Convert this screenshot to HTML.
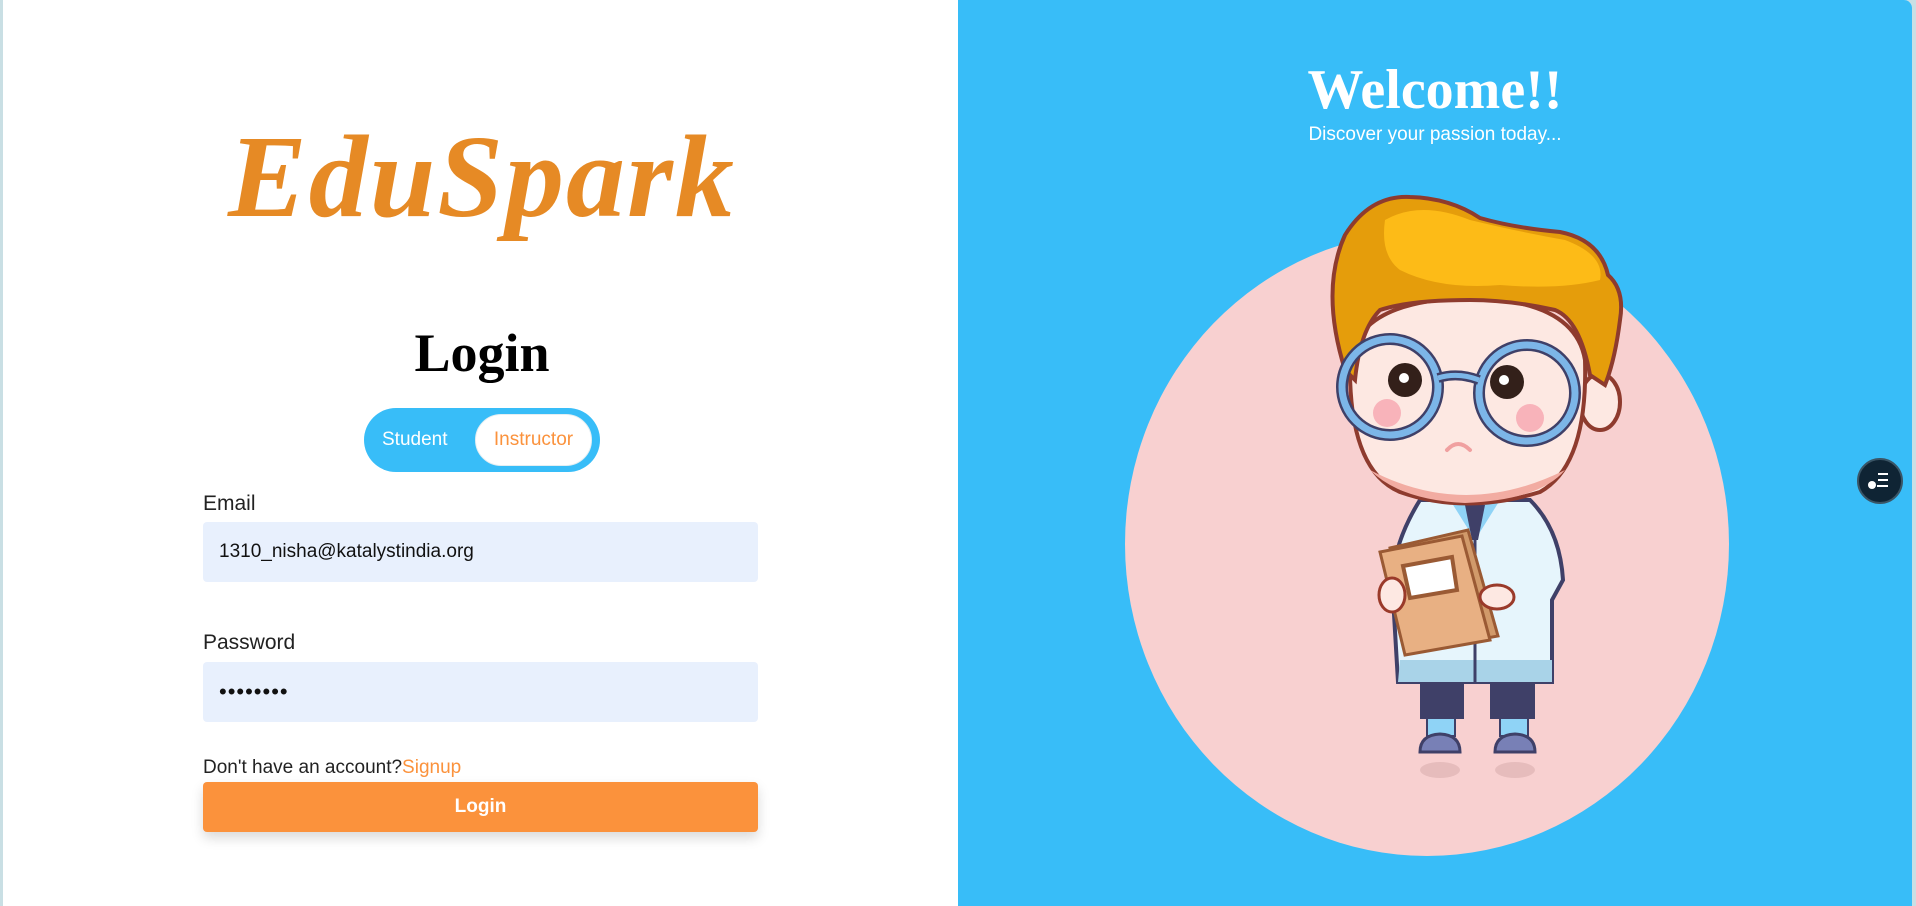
<!DOCTYPE html>
<html><head><meta charset="utf-8"><style>
html,body{margin:0;padding:0}
body{width:1916px;height:906px;overflow:hidden;background:#c9dfe4;position:relative;font-family:"Liberation Sans",sans-serif}
.card{position:absolute;left:3px;top:0;width:1909px;height:906px;border-radius:0 8px 0 0;overflow:hidden;background:#fff}
.right{position:absolute;left:955px;top:0;width:954px;height:906px;background:#38bdf8}
.logo{position:absolute;left:0;width:958px;top:92px;text-align:center;font-family:"Liberation Serif",serif;font-style:italic;font-weight:bold;font-size:118px;color:#e68a25;letter-spacing:2px;line-height:170px}
.h{position:absolute;left:0;width:958px;top:322px;text-align:center;font-family:"Liberation Serif",serif;font-weight:bold;font-size:54px;color:#000}
.toggle{position:absolute;left:361px;top:408px;width:236px;height:64px;border-radius:32px;background:#38bdf8}
.toggle .s{position:absolute;left:18px;top:0;line-height:64px;color:#fff;font-size:19px}
.toggle .i{position:absolute;left:111px;top:6px;width:117px;height:52px;border-radius:26px;background:#fff;border:1px solid #e4eef2;box-sizing:border-box;color:#fb923c;font-size:19px;line-height:50px;text-align:center}
.lbl{position:absolute;left:200px;font-size:21px;color:#222}
.inp{position:absolute;left:200px;width:555px;height:60px;background:#e8f0fd;border-radius:4px;font-size:19px;line-height:60px;padding-left:16px;box-sizing:border-box;color:#111}
.btn{position:absolute;left:200px;top:782px;width:555px;height:50px;background:#fb923c;border-radius:4px;color:#fff;font-weight:bold;font-size:19px;text-align:center;line-height:50px;box-shadow:0 6px 12px rgba(0,0,0,.15)}
</style></head><body>
<div class="card">
<div class="logo">EduSpark</div>
<div class="h">Login</div>
<div class="toggle"><span class="s">Student</span><div class="i">Instructor</div></div>
<div class="lbl" style="top:492px">Email</div>
<div class="inp" style="top:522px">1310_nisha@katalystindia.org</div>
<div class="lbl" style="top:631px">Password</div>
<div class="inp" style="top:662px;font-size:22px;letter-spacing:1px">••••••••</div>
<div class="lbl" style="top:757px;font-size:19px">Don't have an account?<span style="color:#fb923c">Signup</span></div>
<div class="btn">Login</div>
<div class="right">
<div style="position:absolute;left:0;width:954px;top:58px;text-align:center;color:#fff;font-family:'Liberation Serif',serif;font-weight:bold;font-size:56px">Welcome!!</div>
<div style="position:absolute;left:0;width:954px;top:124px;text-align:center;color:#fff;font-size:19px">Discover your passion today...</div>
</div>
</div>
<svg width="1916" height="906" style="position:absolute;left:0;top:0">
<ellipse cx="1427" cy="544" rx="302" ry="312" fill="#f8d0d0"/>
<ellipse cx="1440" cy="770" rx="20" ry="8" fill="#e6bcbc"/><ellipse cx="1515" cy="770" rx="20" ry="8" fill="#e6bcbc"/>
<path d="M1420 500 Q1395 540 1392 580 L1398 682 L1552 682 L1552 600 L1563 580 Q1560 530 1530 500 Z" fill="#e6f5fc" stroke="#3f4068" stroke-width="4"/>
<path d="M1400 660 L1552 660 L1552 682 L1398 682 Z" fill="#a9d3e8"/>
<path d="M1450 500 L1475 540 L1500 500 Z" fill="#8fd3f6"/>
<path d="M1465 505 L1485 505 L1478 540 L1472 540 Z" fill="#3f4068"/>
<path d="M1475 520 L1475 682" stroke="#3f4068" stroke-width="3"/>
<rect x="1420" y="683" width="44" height="36" fill="#3f4068"/><rect x="1490" y="683" width="45" height="36" fill="#3f4068"/>
<rect x="1427" y="718" width="28" height="18" fill="#8fd3f6" stroke="#3f4068" stroke-width="2"/><rect x="1500" y="718" width="28" height="18" fill="#8fd3f6" stroke="#3f4068" stroke-width="2"/>
<path d="M1420 752 Q1420 735 1440 734 Q1460 735 1460 752 Z" fill="#7880b6" stroke="#3f4068" stroke-width="3"/>
<path d="M1495 752 Q1495 735 1515 734 Q1535 735 1535 752 Z" fill="#7880b6" stroke="#3f4068" stroke-width="3"/>
<path d="M1390 548 L1468 530 L1498 636 L1410 652 Z" fill="#d19a6a" stroke="#9a5a34" stroke-width="3"/>
<path d="M1380 552 L1462 536 L1490 640 L1405 655 Z" fill="#e8b083" stroke="#9a5a34" stroke-width="3"/>
<path d="M1403 566 L1452 557 L1457 590 L1410 598 Z" fill="#fff" stroke="#9a5a34" stroke-width="4"/>
<ellipse cx="1392" cy="595" rx="13" ry="17" fill="#fde8e2" stroke="#9a3a2a" stroke-width="3"/>
<ellipse cx="1497" cy="597" rx="17" ry="12" fill="#fde8e2" stroke="#9a3a2a" stroke-width="3"/>
<ellipse cx="1600" cy="402" rx="20" ry="28" fill="#fde8e2" stroke="#8e3b2e" stroke-width="4"/>
<path d="M1350 360 Q1348 470 1400 492 Q1465 515 1540 492 Q1588 465 1585 360 Q1575 300 1470 298 Q1360 300 1350 360 Z" fill="#fde8e2" stroke="#8e3b2e" stroke-width="4"/>
<path d="M1370 470 Q1465 520 1565 470 Q1540 500 1465 503 Q1400 500 1370 470 Z" fill="#f2aca2"/>
<path d="M1345 370 Q1320 290 1345 235 Q1370 195 1410 197 Q1450 198 1480 218 Q1515 228 1560 232 Q1600 240 1608 275 Q1625 290 1620 320 Q1615 360 1605 385 L1590 375 Q1580 320 1555 310 Q1510 300 1470 300 Q1410 300 1380 310 Q1360 330 1355 380 Z" fill="#e59d0b" stroke="#8e3b2e" stroke-width="4"/>
<path d="M1385 220 Q1420 200 1470 220 Q1520 232 1565 240 Q1605 255 1600 280 Q1560 290 1500 285 Q1440 290 1400 270 Q1380 255 1385 220 Z" fill="#fdbb17"/>
<circle cx="1390" cy="387" r="48" fill="none" stroke="#3f4068" stroke-width="12"/>
<circle cx="1390" cy="387" r="48" fill="none" stroke="#7cb6e8" stroke-width="7"/>
<circle cx="1527" cy="393" r="48" fill="none" stroke="#3f4068" stroke-width="12"/>
<circle cx="1527" cy="393" r="48" fill="none" stroke="#7cb6e8" stroke-width="7"/>
<path d="M1438 378 Q1458 372 1479 380" fill="none" stroke="#3f4068" stroke-width="10"/>
<path d="M1438 378 Q1458 372 1479 380" fill="none" stroke="#7cb6e8" stroke-width="5"/>
<circle cx="1405" cy="380" r="17" fill="#33201a"/><circle cx="1404" cy="378" r="5" fill="#fff"/>
<circle cx="1507" cy="382" r="17" fill="#33201a"/><circle cx="1504" cy="380" r="5" fill="#fff"/>
<circle cx="1387" cy="413" r="14" fill="#f8b3ba"/><circle cx="1530" cy="418" r="14" fill="#f8b3ba"/>
<path d="M1447 450 Q1458 438 1470 450" fill="none" stroke="#f0a0a0" stroke-width="4" stroke-linecap="round"/>
<circle cx="1880" cy="481" r="22" fill="#0f2434" stroke="#3a5566" stroke-width="2"/>
<path d="M1878 474h10M1878 480h10M1877 486h11" stroke="#fff" stroke-width="2"/>
<circle cx="1872" cy="485" r="4" fill="#fff"/>
</svg>
</body></html>
